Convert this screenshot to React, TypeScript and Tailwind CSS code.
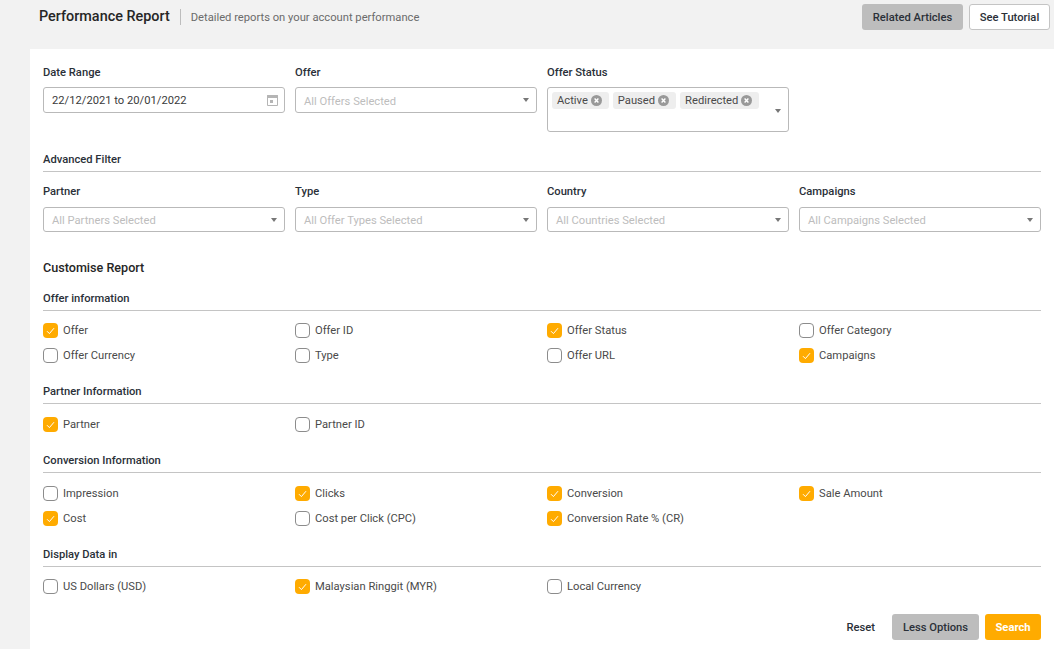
const Caret = () => (
  <svg width="6" height="4" viewBox="0 0 6 4" className="shrink-0"><path d="M0 0h6L3 4z" fill="#777" /></svg>
);

const Field = ({ label, placeholder }: { label: string; placeholder: string }) => (
  <div>
    <div className="h-[16px] text-[11.2px] leading-[18px] font-medium text-[#2a3038]">{label}</div>
    <div className="mt-[8px] flex h-[25px] items-center justify-between rounded-[3px] border border-[#b9b9b9] bg-white pl-[8px] pr-[7px]">
      <span className="pt-[3px] text-[11.2px] text-[#bdbdbd]">{placeholder}</span>
      <Caret />
    </div>
  </div>
);

const Tag = ({ label }: { label: string }) => (
  <span className="flex h-[17px] items-center gap-[3px] rounded-[3px] bg-[#eeeeee] pl-[5px] pr-[7px] text-[11.2px] text-[#4a4a4a]">
    <span className="pt-[2px]">{label}</span>
    <svg width="11" height="11" viewBox="0 0 11 11">
      <circle cx="5.5" cy="5.5" r="5.5" fill="#999" />
      <path d="M3.6 3.6l3.8 3.8M7.4 3.6l-3.8 3.8" stroke="#fff" strokeWidth="1.4" />
    </svg>
  </span>
);

const Check = ({ label, on }: { label: string; on?: boolean }) => (
  <div className="flex h-[15px] items-center gap-[5px]">
    <span
      className={
        on
          ? "flex h-[15px] w-[15px] items-center justify-center rounded-[4px] bg-[#ffab00]"
          : "h-[15px] w-[15px] rounded-[4px] border border-[#8c8c8c] bg-white"
      }
    >
      {on && (
        <svg width="9" height="8" viewBox="0 0 9 8" fill="none">
          <path d="M1 4.2l2.4 2.4L8 1.2" stroke="#fff" strokeWidth="1" />
        </svg>
      )}
    </span>
    <span className="pt-[2px] text-[11.2px] text-[#4a4a4a]">{label}</span>
  </div>
);

const Section = ({
  title,
  items,
  className,
  gridClass,
}: {
  title: string;
  items: [string, boolean][];
  className: string;
  gridClass: string;
}) => (
  <div className={className}>
    <div className="h-[16px] text-[11.2px] leading-[18px] font-medium text-[#2a3038]">{title}</div>
    <div className="mt-[4px] h-px bg-[#c4c4c4]" />
    <div className={gridClass}>
      {items.map(([l, on]) => (
        <Check key={l} label={l} on={on} />
      ))}
    </div>
  </div>
);

export default function App() {
  return (
    <div className="h-[649px] w-[1054px] overflow-hidden bg-[#f2f2f2] font-['Roboto',sans-serif]">
      <header className="flex h-[49px] items-start justify-between pl-[39px] pr-[4px]">
        <div className="flex items-center pt-[8px]">
          <h1 className="text-[14.4px] leading-[18px] font-medium text-[#262626]">Performance Report</h1>
          <span className="mx-[10px] h-[16px] w-px bg-[#bdbdbd]" />
          <span className="pt-[2px] text-[11.2px] text-[#6b6b6b]">Detailed reports on your account performance</span>
        </div>
        <div className="flex gap-[6px] pt-[4px]">
          <button className="h-[26px] w-[101px] rounded-[3px] bg-[#bdbdbd] pt-[2px] text-[11.2px] font-medium text-[#2a3038]">
            Related Articles
          </button>
          <button className="h-[26px] w-[81px] rounded-[3px] border border-[#c4c4c4] bg-white pt-[2px] text-[11.2px] font-medium text-[#2a3038]">
            See Tutorial
          </button>
        </div>
      </header>

      <main className="ml-[30px] h-[600px] bg-white pl-[13px] pr-[13px] pt-[15px]">
        <div className="grid grid-cols-4 gap-x-[10px]">
          <div>
            <div className="h-[16px] text-[11.2px] leading-[18px] font-medium text-[#2a3038]">Date Range</div>
            <div className="mt-[7px] flex h-[26px] items-center justify-between rounded-[3px] border border-[#b9b9b9] pl-[8px] pr-[6px]">
              <span className="pt-[2px] text-[11.2px] text-[#3a3a3a]">22/12/2021 to 20/01/2022</span>
              <svg width="11" height="12" viewBox="0 0 11 12" fill="none">
                <path d="M.5 1.5h10v10H.5z" stroke="#b5b5b5" />
                <path d="M.5 1.5h10v2H.5z" fill="#b5b5b5" stroke="#b5b5b5" />
                <rect x="3" y="6" width="3" height="3" fill="#b5b5b5" />
              </svg>
            </div>
          </div>
          <div>
            <div className="h-[16px] text-[11.2px] leading-[18px] font-medium text-[#2a3038]">Offer</div>
            <div className="mt-[7px] flex h-[26px] items-center justify-between rounded-[3px] border border-[#b9b9b9] pl-[8px] pr-[7px]">
              <span className="pt-[4px] text-[11.2px] text-[#bdbdbd]">All Offers Selected</span>
              <Caret />
            </div>
          </div>
          <div>
            <div className="h-[16px] text-[11.2px] leading-[18px] font-medium text-[#2a3038]">Offer Status</div>
            <div className="relative mt-[7px] h-[45px] rounded-[3px] border border-[#b9b9b9] pl-[4px] pt-[4px]">
              <div className="flex gap-[4px]">
                <Tag label="Active" />
                <Tag label="Paused" />
                <Tag label="Redirected" />
              </div>
              <span className="absolute right-[7px] top-[21px] flex">
                <Caret />
              </span>
            </div>
          </div>
        </div>

        <div className="mt-[19px] h-[16px] text-[11.2px] leading-[18px] font-medium text-[#2a3038]">Advanced Filter</div>
        <div className="mt-[4px] h-px bg-[#c4c4c4]" />

        <div className="mt-[11px] grid grid-cols-4 gap-x-[10px]">
          <Field label="Partner" placeholder="All Partners Selected" />
          <Field label="Type" placeholder="All Offer Types Selected" />
          <Field label="Country" placeholder="All Countries Selected" />
          <Field label="Campaigns" placeholder="All Campaigns Selected" />
        </div>

        <div className="mt-[27px] h-[18px] text-[12.6px] leading-[18px] font-medium text-[#262626]">Customise Report</div>

        <Section
          className="mt-[13px]"
          gridClass="mt-[12px] grid grid-cols-4 gap-x-[10px] gap-y-[10px]"
          title="Offer information"
          items={[
            ["Offer", true],
            ["Offer ID", false],
            ["Offer Status", true],
            ["Offer Category", false],
            ["Offer Currency", false],
            ["Type", false],
            ["Offer URL", false],
            ["Campaigns", true],
          ]}
        />
        <Section
          className="mt-[20px]"
          gridClass="mt-[13px] grid grid-cols-4 gap-x-[10px] gap-y-[10px]"
          title="Partner Information"
          items={[
            ["Partner", true],
            ["Partner ID", false],
          ]}
        />
        <Section
          className="mt-[20px]"
          gridClass="mt-[13px] grid grid-cols-4 gap-x-[10px] gap-y-[10px]"
          title="Conversion Information"
          items={[
            ["Impression", false],
            ["Clicks", true],
            ["Conversion", true],
            ["Sale Amount", true],
            ["Cost", true],
            ["Cost per Click (CPC)", false],
            ["Conversion Rate % (CR)", true],
          ]}
        />
        <Section
          className="mt-[20px]"
          gridClass="mt-[12px] grid grid-cols-4 gap-x-[10px] gap-y-[10px]"
          title="Display Data in"
          items={[
            ["US Dollars (USD)", false],
            ["Malaysian Ringgit (MYR)", true],
            ["Local Currency", false],
          ]}
        />

        <div className="mt-[20px] flex items-center justify-end">
          <span className="mr-[17px] pt-[2px] text-[11.2px] font-medium text-[#2a3038]">Reset</span>
          <button className="h-[26px] w-[87px] rounded-[3px] bg-[#bdbdbd] pt-[2px] text-[11.2px] font-medium text-[#2a3038]">
            Less Options
          </button>
          <button className="ml-[6px] h-[26px] w-[56px] rounded-[3px] bg-[#ffab00] pt-[2px] text-[11.2px] font-bold text-white">
            Search
          </button>
        </div>
      </main>
    </div>
  );
}
